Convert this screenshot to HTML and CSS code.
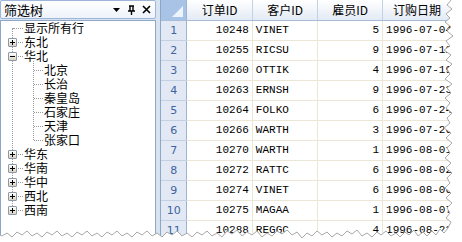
FILE: index.html
```html
<!DOCTYPE html>
<html lang="zh">
<head>
    <meta charset="UTF-8">
    <title>筛选树</title>
    <link rel="stylesheet" href="styles.css">
</head>
<body>
    <div class="app">
        <!-- Dock panel with tree -->
        <div class="dock">
            <div class="dock-head">
                <span class="dock-title">筛选树</span>
                <span class="dock-tools">
                    <svg width="9" height="9" viewBox="0 0 9 9"><path d="M1 3h7L4.5 7z" fill="#000"/></svg>
                    <svg width="9" height="10" viewBox="0 0 9 10"><path d="M2 1h5M3 1v5M6 1v5M1 6h7M4.5 6v4" stroke="#000" stroke-width="1.4" fill="none"/></svg>
                    <svg width="9" height="9" viewBox="0 0 9 9"><path d="M1 1l7 7M8 1L1 8" stroke="#000" stroke-width="1.6"/></svg>
                </span>
            </div>
            <div class="tree">
                <div class="roots">
                    <div class="node">显示所有行</div>
                    <div class="node"><span class="exp plus"></span>东北</div>
                    <div class="node"><span class="exp"></span>华北</div>
                    <div class="kids">
                        <div class="node kid">北京</div>
                        <div class="node kid">长治</div>
                        <div class="node kid">秦皇岛</div>
                        <div class="node kid">石家庄</div>
                        <div class="node kid">天津</div>
                        <div class="node kid">张家口</div>
                    </div>
                    <div class="node"><span class="exp plus"></span>华东</div>
                    <div class="node"><span class="exp plus"></span>华南</div>
                    <div class="node"><span class="exp plus"></span>华中</div>
                    <div class="node"><span class="exp plus"></span>西北</div>
                    <div class="node"><span class="exp plus"></span>西南</div>
                </div>
            </div>
        </div>

        <!-- Orders grid -->
        <div class="grid">
            <table>
                <thead>
                    <tr>
                        <th class="corner"></th>
                        <th class="col">订单ID</th>
                        <th class="col">客户ID</th>
                        <th class="col">雇员ID</th>
                        <th class="col">订购日期</th>
                    </tr>
                </thead>
                <tbody id="rows"></tbody>
            </table>
        </div>

        <!-- Torn edge of the screenshot -->
        <svg class="torn" width="462" height="242" viewBox="0 0 462 242">
            <path fill="#fff" stroke="#a8a8a8" stroke-width="1"
                d="M451 0L447 5L452 9L446 14L450 18L445 22L451 27L447 31L453 36L446 41L450 46L444 50L451 55L446 60L452 64L447 69L450 74L445 79L452 84L447 88L451 93L445 98L450 103L446 108L452 113L447 118L450 123L444 128L451 133L446 138L452 143L447 148L450 153L445 158L451 163L446 168L452 173L447 178L450 183L445 188L451 193L446 198L452 203L447 208L450 213L446 218L451 222L448 228L444 233L440 229L436 235L432 231L427 236L423 232L418 236L414 230L409 235L405 232L400 237L396 233L391 236L386 231L381 235L377 232L372 237L367 233L362 236L357 230L352 234L347 231L342 236L337 233L332 237L327 232L322 235L317 231L312 236L307 233L302 238L297 232L292 235L287 230L282 234L277 231L272 236L267 233L262 237L257 231L252 235L247 232L242 236L237 230L232 234L227 231L222 237L217 233L212 236L207 231L202 235L197 232L192 237L187 233L182 236L177 231L172 235L167 232L162 237L157 233L152 236L147 231L142 235L137 232L132 237L127 233L122 236L117 231L112 235L107 232L102 237L97 233L92 236L87 231L82 235L77 232L72 237L67 233L62 236L57 231L52 235L47 232L42 237L37 233L32 236L27 231L22 235L17 232L12 237L7 233L2 236L-2 234L-2 244L464 244L464 -2L451 -2Z"/>
        </svg>
    </div>

    <script>
        const orders = [
            [10248, 'VINET', 5, '1996-07-04'],
            [10255, 'RICSU', 9, '1996-07-12'],
            [10260, 'OTTIK', 4, '1996-07-19'],
            [10263, 'ERNSH', 9, '1996-07-23'],
            [10264, 'FOLKO', 6, '1996-07-24'],
            [10266, 'WARTH', 3, '1996-07-26'],
            [10270, 'WARTH', 1, '1996-08-01'],
            [10272, 'RATTC', 6, '1996-08-02'],
            [10274, 'VINET', 6, '1996-08-06'],
            [10275, 'MAGAA', 1, '1996-08-07'],
            [10288, 'REGGC', 4, '1996-08-23']
        ];

        const rows = document.getElementById('rows');
        orders.forEach((o, i) => {
            const tr = document.createElement('tr');
            tr.innerHTML = `
                <td class="rowhead">${i + 1}</td>
                <td class="num">${o[0]}</td>
                <td>${o[1]}</td>
                <td class="num">${o[2]}</td>
                <td>${o[3]}</td>
            `;
            rows.appendChild(tr);
        });
    </script>
</body>
</html>
```

FILE: styles.css
```css
* {
    margin: 0;
    padding: 0;
    box-sizing: border-box;
}

body {
    width: 462px;
    height: 242px;
    overflow: hidden;
    background: #fff;
    font-family: "Noto Sans CJK SC", sans-serif;
    font-size: 12px;
    color: #000;
}

.app {
    position: relative;
    display: flex;
    gap: 4px;
    width: 462px;
    height: 242px;
    background: #d7e3f1;
}

/* Dock panel */
.dock {
    width: 156px;
    display: flex;
    flex-direction: column;
    gap: 1px;
}

.dock-head {
    height: 19px;
    display: flex;
    align-items: center;
    justify-content: space-between;
    padding: 0 4px 0 3px;
    border: 1px solid #9cb5d9;
    border-radius: 2px;
    background: linear-gradient(to bottom, #ffffff, #eef3fa);
}

.dock-title {
    font-size: 13px;
    line-height: 17px;
}

.dock-tools {
    display: flex;
    align-items: center;
    gap: 6px;
}

.tree {
    flex: 1;
    background: #fff;
    border: 1px solid #8fa7c6;
    border-bottom: none;
    padding-top: 0;
}

.roots {
    position: relative;
}

.roots::before {
    content: '';
    position: absolute;
    left: 11px;
    top: 7px;
    bottom: 7px;
    border-left: 1px dotted #9a9a9a;
}

.node {
    position: relative;
    height: 14px;
    line-height: 14px;
    padding-left: 23px;
    white-space: nowrap;
}

.node::before {
    content: '';
    position: absolute;
    left: 12px;
    top: 7px;
    width: 10px;
    border-top: 1px dotted #9a9a9a;
}

.exp {
    position: absolute;
    z-index: 1;
    left: 7px;
    top: 3px;
    width: 9px;
    height: 9px;
    border: 1px solid #8d98a8;
    border-radius: 1px;
    background:
        linear-gradient(#000, #000) center / 5px 1px no-repeat,
        linear-gradient(to bottom, #ffffff, #d9d3c3);
}

.exp.plus {
    background:
        linear-gradient(#000, #000) center / 5px 1px no-repeat,
        linear-gradient(#000, #000) center / 1px 5px no-repeat,
        linear-gradient(to bottom, #ffffff, #d9d3c3);
}

.kids {
    position: relative;
}

.kids::before {
    content: '';
    position: absolute;
    left: 32px;
    top: -2px;
    bottom: 7px;
    border-left: 1px dotted #9a9a9a;
}

.node.kid {
    padding-left: 43px;
}

.node.kid::before {
    left: 33px;
    width: 9px;
}

/* Grid */
.grid {
    flex: 1;
    background: #fff;
    border-left: 1px solid #8fa7c6;
    overflow: hidden;
}

table {
    border-collapse: collapse;
    table-layout: fixed;
    font-family: "Liberation Mono", "Noto Sans CJK SC", monospace;
    font-size: 11px;
}

th {
    height: 20px;
    font-weight: normal;
    font-family: "Noto Sans CJK SC", "Liberation Mono", sans-serif;
    font-size: 12px;
    background: linear-gradient(to bottom, #ffffff, #e3eaf4);
    border-right: 1px solid #c3d1e2;
    border-bottom: 1px solid #a7bdd6;
    white-space: nowrap;
    overflow: hidden;
}

th.corner {
    width: 27px;
    background: #a8c3e6;
    border-right: 1px solid #9ab3d3;
    position: relative;
}

th.corner::after {
    content: '';
    position: absolute;
    right: 3px;
    bottom: 3px;
    border-style: solid;
    border-width: 0 0 11px 11px;
    border-color: transparent transparent #eef4fb transparent;
}

th.col {
    width: 70px;
}

th.col:last-child {
    width: 80px;
    text-align: left;
    padding-left: 10px;
}

td {
    height: 20px;
    padding: 0 3px;
    border-right: 1px solid #ebe6d6;
    border-bottom: 1px solid #ebe6d6;
    white-space: nowrap;
    overflow: hidden;
}

td.num {
    text-align: right;
}

td.rowhead {
    text-align: center;
    color: #3d63a0;
    font-family: "DejaVu Sans", sans-serif;
    font-size: 11px;
    background: #e2e9f4;
    border-right: 1px solid #9ab3d3;
    border-bottom: 1px solid #c2d0e2;
}

.torn {
    position: absolute;
    left: 0;
    top: 0;
}
```
